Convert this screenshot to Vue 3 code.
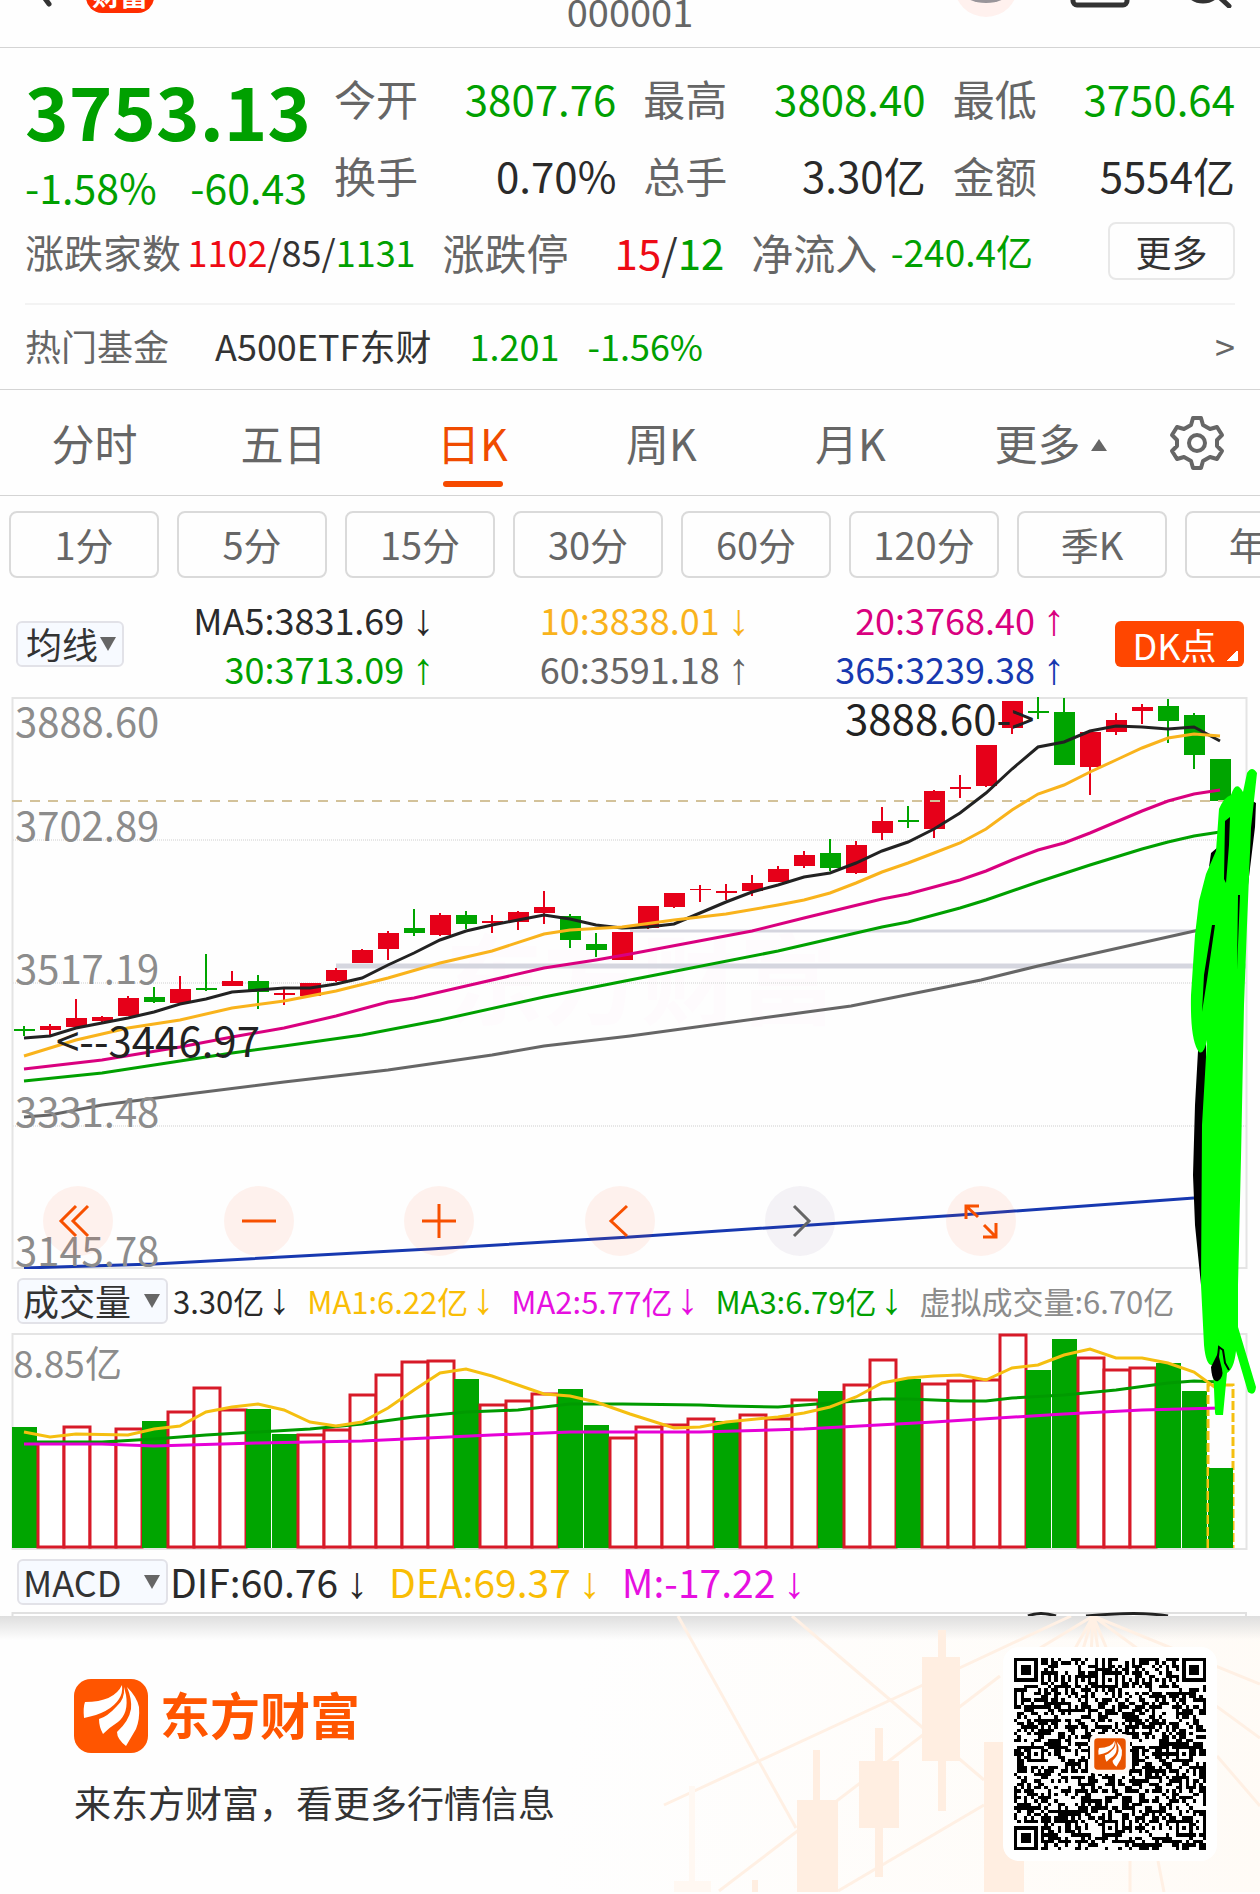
<script setup>
import { ref } from 'vue'

const tabs = ['分时', '五日', '日K', '周K', '月K']
const activeTab = ref('日K')
const periods = ['1分', '5分', '15分', '30分', '60分', '120分', '季K', '年K']

const quotes = [
  { label: '今开', value: '3807.76', tone: 'green' },
  { label: '最高', value: '3808.40', tone: 'green' },
  { label: '最低', value: '3750.64', tone: 'green' },
  { label: '换手', value: '0.70%', tone: 'dark' },
  { label: '总手', value: '3.30亿', tone: 'dark' },
  { label: '金额', value: '5554亿', tone: 'dark' }
]

const averages = [
  { text: 'MA5:3831.69', arrow: '↓', tone: 'dark' },
  { text: '10:3838.01', arrow: '↓', tone: 'yellow' },
  { text: '20:3768.40', arrow: '↑', tone: 'pink' },
  { text: '30:3713.09', arrow: '↑', tone: 'green' },
  { text: '60:3591.18', arrow: '↑', tone: 'gray' },
  { text: '365:3239.38', arrow: '↑', tone: 'blue' }
]

const volumeItems = [
  { text: '3.30亿', arrow: '↓', tone: 'dark' },
  { text: 'MA1:6.22亿', arrow: '↓', tone: 'gold' },
  { text: 'MA2:5.77亿', arrow: '↓', tone: 'magenta' },
  { text: 'MA3:6.79亿', arrow: '↓', tone: 'green' },
  { text: '虚拟成交量:6.70亿', arrow: '', tone: 'light' }
]

const macdItems = [
  { text: 'DIF:60.76', arrow: '↓', tone: 'dark' },
  { text: 'DEA:69.37', arrow: '↓', tone: 'gold' },
  { text: 'M:-17.22', arrow: '↓', tone: 'magenta' }
]

const RED = '#e60019'
const GREEN = '#00a500'
const STEP = 26
const cx = (i) => 24 + i * STEP

// rise, body top, body bottom, high, low
const candles = [
  [0, 332, 334, 329, 339], [1, 329, 333, 327, 338], [1, 321, 330, 302, 331],
  [1, 320, 324, 319, 326], [1, 301, 319, 299, 319], [0, 300, 305, 290, 306],
  [1, 292, 306, 279, 306], [0, 291, 293, 257, 294], [1, 284, 289, 274, 289],
  [0, 284, 295, 278, 312], [1, 296, 298, 292, 308], [1, 286, 299, 286, 300],
  [1, 273, 284, 271, 285], [1, 253, 266, 252, 266], [1, 236, 252, 234, 263],
  [0, 231, 236, 212, 239], [1, 218, 238, 216, 239], [0, 218, 227, 214, 232],
  [1, 224, 226, 218, 236], [1, 215, 225, 214, 233], [1, 210, 216, 194, 227],
  [0, 219, 243, 217, 251], [0, 247, 253, 236, 260], [1, 235, 263, 235, 263],
  [1, 209, 231, 209, 232], [1, 196, 210, 196, 211], [1, 192, 193, 188, 205],
  [1, 194, 196, 187, 203], [1, 186, 194, 178, 199], [1, 172, 185, 169, 185],
  [1, 158, 169, 154, 171], [0, 156, 171, 142, 174], [1, 148, 176, 144, 177],
  [1, 124, 136, 110, 143], [0, 123, 125, 109, 131], [1, 94, 132, 93, 141],
  [1, 90, 92, 78, 101], [1, 48, 89, 48, 90], [1, 4, 31, 4, 37],
  [0, 14, 16, 0, 22], [0, 15, 68, 1, 68], [1, 35, 70, 35, 98],
  [1, 23, 35, 16, 38], [1, 10, 14, 7, 27], [0, 9, 24, 2, 46],
  [0, 18, 58, 16, 72], [0, 62, 104, 62, 104]
].map(([up, top, bottom, high, low], i) => ({ x: cx(i), top, bottom, high, low, color: up ? RED : GREEN }))

const toPoints = (pairs) => pairs.map(([i, y]) => `${Math.round(cx(i))},${y}`).join(' ')

const ma5 = [341, 339, 331, 326, 321, 315, 307, 302, 295, 293, 291, 291, 287, 281, 268, 256, 243, 234, 228, 223, 218, 222, 228, 231, 230, 227, 216, 205, 195, 188, 180, 176, 166, 154, 145, 132, 116, 96, 72, 50, 45, 34, 29, 30, 32, 30, 44].map((y, i) => [i, y])

const priceLines = [
  { color: '#666666', points: toPoints([[0, 420], [1, 418], [3, 408], [6, 398], [10, 385], [14, 373], [18, 358], [20, 349], [23.3, 339], [31.8, 309], [36.8, 283], [39, 269], [45.2, 233]]) },
  { color: '#1738b0', points: toPoints([[0, 571], [5, 567], [15.6, 552], [23.3, 540], [36, 518], [45, 501]]) },
  { color: '#00a000', points: toPoints([[0, 384], [3, 376], [6, 364], [8, 356], [10, 349], [13, 338], [16, 323], [20, 300], [23.3, 283], [29, 254], [33, 230], [34, 225], [36, 211], [37, 203], [39, 185], [41, 168], [43, 152], [44, 145], [45, 139], [46, 135]]) },
  { color: '#d9007f', points: toPoints([[0, 372], [3, 363], [6, 350], [8, 340], [10, 331], [12, 319], [14, 305], [15, 301], [17, 289], [20, 271], [22, 263], [23.3, 257], [28, 234], [30, 221], [33, 202], [34, 197], [36, 183], [37, 174], [38, 163], [39, 153], [40, 146], [41, 136], [43, 114], [44, 104], [45, 97], [46, 93]]) },
  { color: '#222222', points: toPoints(ma5) },
  { color: '#f9b31c', points: toPoints([[0, 359], [2, 343], [3, 337], [4, 331], [6, 323], [8, 311], [10, 304], [12, 294], [14, 281], [16, 266], [18, 254], [20, 237], [21, 233], [23, 230], [25, 223], [27, 217], [29, 208], [30, 203], [31, 196], [32, 186], [33, 175], [34, 166], [35, 156], [36, 146], [37, 132], [38, 113], [39, 97], [40, 88], [41, 75], [42, 63], [43, 51], [44, 41], [45, 37], [46, 39]]) }
]

const axis = [
  { y: 40, text: '3888.60' },
  { y: 144, text: '3702.89' },
  { y: 287, text: '3517.19' },
  { y: 430, text: '3331.48' },
  { y: 569, text: '3145.78' }
]

const volTops = [94, 109, 93, 109, 95, 88, 78, 54, 76, 76, 101, 101, 96, 61, 41, 28, 27, 46, 71, 67, 60, 56, 92, 104, 93, 91, 85, 88, 81, 85, 66, 58, 51, 26, 46, 50, 47, 46, 1, 37, 6, 24, 36, 34, 30, 58, 135]
const volDown = [0, 5, 9, 10, 17, 21, 22, 27, 31, 34, 39, 40, 44, 45, 46]
const volBars = volTops.map((y, i) => ({ x: 12 + i * STEP, y, down: volDown.includes(i) }))

const volLines = [
  { color: '#009a00', points: toPoints([[0, 109], [3, 109], [5, 106], [7, 102], [9, 99], [11, 96], [13, 91], [15, 84], [17, 79], [19, 77], [21, 71], [23, 71], [26, 72], [27, 73], [29, 74], [31, 70], [33, 66], [34, 66], [36, 68], [37, 68], [38, 65], [40, 62], [42, 57], [44, 50], [45, 48], [46, 49]]) },
  { color: '#f5bf10', points: toPoints([[0, 99], [1, 104], [2, 101], [4, 102], [5, 96], [6, 93], [7, 79], [8, 74], [9, 71], [10, 77], [11, 89], [12, 93], [13, 89], [14, 75], [15, 57], [16, 40], [17, 36], [18, 43], [19, 52], [20, 61], [21, 63], [22, 69], [23.3, 81], [25, 95], [26, 94], [27, 89], [29, 84], [30, 80], [31, 74], [32, 64], [33, 50], [34, 45], [35, 43], [36, 42], [37, 47], [38, 35], [39, 32], [40, 22], [41, 16], [42, 25], [43, 25], [44, 30], [45, 39], [46, 58]]) },
  { color: '#e600d6', points: toPoints([[0, 111], [3, 111], [5, 113], [9, 110], [13, 108], [18, 102], [21, 99], [26, 99], [30, 96], [35, 89], [40, 81], [43, 77], [46, 75]]) }
]

// QR matrix, 57 modules a side
const buildQr = () => {
  const n = 57
  let seed = 20251
  const rand = () => {
    seed = (seed * 1103515245 + 12345) % 2147483648
    return seed / 2147483648
  }
  const grid = Array.from({ length: n }, () => Array.from({ length: n }, () => rand() > 0.5))
  const ring = (r, c, half, quiet) => {
    for (let y = -half - quiet; y <= half + quiet; y++) {
      for (let x = -half - quiet; x <= half + quiet; x++) {
        const d = Math.max(Math.abs(x), Math.abs(y))
        if (grid[r + y] && c + x >= 0 && c + x < n) {
          grid[r + y][c + x] = d <= half && d !== half - 1
        }
      }
    }
  }
  for (let k = 8; k < n - 8; k++) {
    grid[6][k] = k % 2 === 0
    grid[k][6] = k % 2 === 0
  }
  ring(3, 3, 3, 1)
  ring(3, n - 4, 3, 1)
  ring(n - 4, 3, 3, 1)
  const marks = [[6, 28], [28, 6], [28, 50], [50, 28], [50, 50]]
  marks.forEach(([r, c]) => ring(r, c, 2, 0))
  let d = ''
  grid.forEach((row, y) => row.forEach((on, x) => {
    if (on) d += `M${x} ${y}h1v1h-1z`
  }))
  return d
}
const qrPath = buildQr()
</script>

<template>
  <main class="app">
    <header class="top">
      <button class="back" aria-label="返回">
        <svg width="20" height="30" viewBox="0 0 20 30"><path d="M2 8 L16 27" stroke="#333" stroke-width="5" stroke-linecap="round" /></svg>
      </button>
      <span class="badge">财富</span>
      <h1 class="code">000001</h1>
      <div class="tools">
        <svg width="64" height="64" viewBox="0 0 64 64"><circle cx="32" cy="32" r="32" fill="#fff1ee" /><ellipse cx="32" cy="40" rx="22" ry="10" fill="#99959a" /></svg>
        <svg class="mail" width="60" height="40" viewBox="0 0 60 40"><rect x="3" y="3" width="54" height="34" rx="4" fill="none" stroke="#333" stroke-width="5" /></svg>
        <svg class="search" width="50" height="50" viewBox="0 0 50 50"><circle cx="21" cy="24" r="19" fill="none" stroke="#333" stroke-width="5" /><path d="M34 36 L47 48" stroke="#333" stroke-width="5" stroke-linecap="round" /></svg>
      </div>
    </header>

    <section class="quote">
      <div class="summary">
        <div class="price-box">
          <div class="price">3753.13</div>
          <div class="change"><span>-1.58%</span><span>-60.43</span></div>
        </div>
        <div class="stats">
          <div v-for="item in quotes" :key="item.label" class="stat">
            <span class="label">{{ item.label }}</span>
            <span :class="item.tone">{{ item.value }}</span>
          </div>
        </div>
      </div>
      <div class="breadth">
        <div class="families">
          <span class="label">涨跌家数</span>
          <span class="counts"><span class="red">1102</span>/85/<span class="green">1131</span></span>
        </div>
        <div class="stat limit">
          <span class="label">涨跌停</span>
          <span><span class="red">15</span>/<span class="green">12</span></span>
        </div>
        <div class="stat limit">
          <span class="label">净流入</span>
          <span class="green flow">-240.4亿</span>
        </div>
        <button class="more">更多</button>
      </div>
      <a href="#" class="fund">
        <span class="label">热门基金</span>
        <span class="fund-name">A500ETF东财</span>
        <span class="green fund-price">1.201</span>
        <span class="green">-1.56%</span>
        <span class="chevron">&gt;</span>
      </a>
    </section>

    <nav class="tabs">
      <button
        v-for="tab in tabs"
        :key="tab"
        class="tab"
        :class="{ active: tab === activeTab }"
        @click="activeTab = tab"
      >{{ tab }}</button>
      <button class="tab tab-more">更多<i class="tri-up"></i></button>
      <button class="gear" aria-label="设置">
        <svg width="56" height="56" viewBox="0 0 56 56" fill="none" stroke="#666" stroke-width="4" stroke-linejoin="round">
          <path d="M24 3 H32 L34 10 L41 14 L48 12 L53 20 L48 25 V31 L53 36 L48 44 L41 42 L34 46 L32 53 H24 L22 46 L15 42 L8 44 L3 36 L8 31 V25 L3 20 L8 12 L15 14 L22 10 Z" />
          <circle cx="28" cy="28" r="8" />
        </svg>
      </button>
    </nav>

    <div class="periods">
      <button v-for="p in periods" :key="p" class="period">{{ p }}</button>
    </div>

    <div class="charts">
      <div class="averages">
        <label class="picker small">
          <select aria-label="指标"><option>均线</option></select>
          <i class="tri-down"></i>
        </label>
        <div class="ma-grid">
          <span v-for="a in averages" :key="a.text" :class="a.tone">{{ a.text }}<b class="arrow">{{ a.arrow }}</b></span>
        </div>
        <button class="dk">DK点</button>
      </div>

      <div class="price-chart">
        <svg class="plot" viewBox="0 0 1260 572">
          <rect x="12.5" y="1" width="1234" height="570" fill="none" stroke="#e4e4e4" stroke-width="2" />
          <text x="445" y="320" class="watermark">东方财富</text>
          <g stroke="#e6e6e6" stroke-width="2" stroke-dasharray="1 1">
            <path d="M13 143H1246M13 286H1246M13 429H1246" />
          </g>
          <path d="M630 234H1246" stroke="#d5d6df" stroke-width="3" />
          <path d="M336 269H1246" stroke="#d5d6df" stroke-width="5" />
          <g v-for="c in candles" :key="c.x" :fill="c.color">
            <rect :x="c.x - 1" :y="c.high" width="2" :height="c.low - c.high" />
            <rect :x="c.x - 10" :y="c.top" width="21" :height="c.bottom - c.top" />
          </g>
          <path d="M12 104H1246" stroke="#d3c29a" stroke-width="2" stroke-dasharray="10 8" />
          <polyline v-for="l in priceLines" :key="l.color" :points="l.points" fill="none" :stroke="l.color" stroke-width="3" />
          <text v-for="a in axis" :key="a.y" x="15" :y="a.y" class="axis">{{ a.text }}</text>
          <text x="845" y="38" class="mark">3888.60-&gt;</text>
          <text x="56" y="360" class="mark">&lt;--3446.97</text>
        </svg>
        <div class="controls">
          <button aria-label="最左"><svg viewBox="0 0 70 70"><path d="M33 20 L18 35 L33 50 M45 20 L30 35 L45 50" /></svg></button>
          <button aria-label="缩小"><svg viewBox="0 0 70 70"><path d="M18 35 H52" /></svg></button>
          <button aria-label="放大"><svg viewBox="0 0 70 70"><path d="M18 35 H52 M35 18 V52" /></svg></button>
          <button aria-label="左移"><svg viewBox="0 0 70 70"><path d="M42 20 L26 35 L42 50" /></svg></button>
          <button aria-label="右移" class="off"><svg viewBox="0 0 70 70"><path d="M29 20 L44 35 L29 50" /></svg></button>
          <button aria-label="全屏"><svg viewBox="0 0 70 70"><path d="M20 33 V20 H33 M20 20 L32 31 M38 39 L50 51 M50 37 V51 H37" /></svg></button>
        </div>
      </div>

      <div class="indicator">
        <label class="picker">
          <select aria-label="副图一"><option>成交量</option></select>
          <i class="tri-down"></i>
        </label>
        <div class="values volume-values">
          <span v-for="v in volumeItems" :key="v.text" :class="v.tone">{{ v.text }}<b v-if="v.arrow" class="arrow">{{ v.arrow }}</b></span>
        </div>
      </div>

      <svg class="plot" viewBox="0 0 1260 218">
        <rect x="12.5" y="1" width="1234" height="215" fill="none" stroke="#e4e4e4" stroke-width="2" />
        <text x="13" y="45" class="axis vol-axis">8.85亿</text>
        <template v-for="b in volBars" :key="b.x">
          <rect v-if="b.down" :x="b.x" :y="b.y" width="25" :height="215 - b.y" fill="#00a500" />
          <rect v-else :x="b.x" :y="b.y + 1" width="26" :height="213 - b.y" fill="#fff" stroke="#d71a28" stroke-width="3" />
        </template>
        <path d="M1208 215V52H1233V215" fill="none" stroke="#f5bf10" stroke-width="3" stroke-dasharray="9 3" />
        <rect x="1209" y="135" width="24" height="80" fill="#00a500" />
        <polyline v-for="l in volLines" :key="l.color" :points="l.points" fill="none" :stroke="l.color" stroke-width="3" />
      </svg>

      <div class="indicator macd">
        <label class="picker">
          <select aria-label="副图二"><option>MACD</option></select>
          <i class="tri-down"></i>
        </label>
        <div class="values macd-values">
          <span v-for="v in macdItems" :key="v.text" :class="v.tone">{{ v.text }}<b class="arrow">{{ v.arrow }}</b></span>
        </div>
      </div>
      <svg class="plot" viewBox="0 0 1260 4">
        <path d="M12.5 4V1H1246V4" fill="none" stroke="#e0e0e0" stroke-width="2" />
        <path d="M1028 4Q1040 -1 1056 4M1086 4Q1140 -1 1168 4" fill="none" stroke="#222" stroke-width="3" />
      </svg>

      <!-- hand drawn marker stroke over both charts -->
      <svg class="scribble" viewBox="0 0 80 660">
        <path d="M67 43 L76 48 L75 72 L68 130 L60 200 H52 Z M31 98 L38 92 V104 L29 112 Z M19 278 L15 350 L13 420 L15 470 L21 530 L26 530 V278 Z" fill="#000" />
        <path d="M67 18 Q72 10 77 18 L71 73 L67 170 L64 250 L61 403 L58 530 V572 L76 632 Q75 642 68 637 L56 596 Q54 614 47 618 L43 660 Q38 668 35 658 L33 610 Q26 612 24 590 L21 530 L22 370 L27 285 Q24 300 19 297 Q10 286 11 240 L15 180 L19 146 L26 119 L36 96 L39 54 Q44 42 51 40 Q56 24 63 37 Z" fill="#00ff00" />
        <path d="M45 66 L50 62 L49 90 L46 128 L44 124 Z M32 170 L35 170 L27 225 L22 257 L24 220 Z M57 215 L58 140 L60 140 Z" fill="#000" />
        <path d="M38 598 L31 612 Q32 628 38 626 Q44 622 42 614 L39 602 Z" fill="#000" />
        <path d="M38 602 L39 592 L43 595 L45 608 L49 615" fill="none" stroke="#000" stroke-width="2" />
      </svg>
    </div>

    <footer class="share">
      <svg class="scene" viewBox="0 0 1260 276" preserveAspectRatio="xMaxYMid slice">
        <g stroke="#fff0e4" stroke-width="3" fill="none">
          <path d="M664 189 L923 69 L1071 0" />
          <path d="M678 0 L796 212" />
          <path d="M792 0 L984 164" />
          <path d="M719 275 L1000 60" />
          <path d="M838 275 L984 189" />
          <path d="M1093 0 L1040 32 M1093 0 L1060 60 M1093 0 L1075 60 M1093 0 L1090 60 M1093 0 L1102 60 M1093 0 L1118 60 M1093 0 L1260 68 M1093 0 L1260 122 M1217 140 L1260 190 M1130 245 V276 M1158 245 L1164 276" />
        </g>
        <g fill="#ffeee1">
          <path d="M938 14h8v181h-8z M922 41h38v104h-38z" />
          <path d="M875 112h8v149h-8z M859 145h40v67h-40z" />
          <path d="M813 134h7v60h-7z M797 184h41v92h-41z" />
          <path d="M1003 65h6v70h-6z M984 126h40v150h-40z" />
          <path d="M752 264h6v12h-6z" />
        </g>
        <path d="M689 170h6v100h-6z M674 265h37v11h-37z" fill="#fff8f2" />
      </svg>
      <div class="brand-box">
        <div class="brand">
          <svg width="74" height="74" viewBox="0 0 74 74">
            <rect width="74" height="74" rx="17" fill="#ff5500" />
            <path d="M10 39 Q9 28 11 23 Q40 23 48 6 Q49 14 45 20 Q36 34 10 39Z M50 8 Q51 20 43 27 Q33 38 25 40 Q25 48 29 55 Q36 48 44 43 Q55 34 52 16Z M53 8 Q63 18 65 28 Q66 40 62 50 L52 67 Q43 60 43 53 Q55 42 57 30 Q58 20 53 8Z" fill="#fff" />
          </svg>
          <strong>东方财富</strong>
        </div>
        <p>来东方财富，看更多行情信息</p>
      </div>
      <div class="qr">
        <svg width="192" height="192" viewBox="0 0 57 57" shape-rendering="crispEdges"><path :d="qrPath" /></svg>
        <svg class="qr-logo" width="40" height="40" viewBox="-10 -10 94 94">
          <rect x="-10" y="-10" width="94" height="94" rx="14" fill="#fffaf6" />
          <rect width="74" height="74" rx="8" fill="#e85400" />
          <path d="M10 39 Q9 28 11 23 Q40 23 48 6 Q49 14 45 20 Q36 34 10 39Z M50 8 Q51 20 43 27 Q33 38 25 40 Q25 48 29 55 Q36 48 44 43 Q55 34 52 16Z M53 8 Q63 18 65 28 Q66 40 62 50 L52 67 Q43 60 43 53 Q55 42 57 30 Q58 20 53 8Z" fill="#fff" />
        </svg>
      </div>
    </footer>
  </main>
</template>

<style>
body {
  background: #fefefe;
}
</style>

<style scoped>
.app {
  font-family: "Noto Sans CJK SC", sans-serif;
  color: #333;
  overflow: hidden;
}

button, select {
  font-family: inherit;
  color: inherit;
  background: none;
  border: none;
  padding: 0;
  margin: 0;
}

.green { color: #00a000; }
.red { color: #ee0a14; }
.dark { color: #2a2a2a; }
.yellow { color: #f9b31c; }
.gold { color: #f9bd05; }
.pink { color: #d9007f; }
.gray { color: #666; }
.light { color: #8c8c8c; }
.blue { color: #1738b0; }
.magenta { color: #e60fe0; }
.label { color: #666; }

/* header, scrolled half out of view */
.top {
  display: flex;
  align-items: flex-end;
  height: 47px;
  border-bottom: 1px solid #d4d4d4;
  overflow: hidden;
}
.back {
  display: flex;
  width: 86px;
  height: 70px;
  justify-content: center;
}
.badge {
  width: 68px;
  height: 40px;
  margin-bottom: 34px;
  border-radius: 16px;
  background: #ff2d00;
  color: #fff;
  font-size: 28px;
  font-weight: 700;
  line-height: 42px;
  text-align: center;
}
.code {
  flex: 1;
  margin: 0 0 6px 152px;
  font-size: 38px;
  font-weight: 400;
  line-height: 60px;
  text-align: center;
  color: #666;
}
.tools {
  display: flex;
  align-items: flex-end;
  gap: 52px;
  margin-right: 28px;
}
.tools svg {
  margin-bottom: 30px;
}
.tools .mail, .tools .search {
  margin-bottom: 39px;
}

.quote {
  padding: 11px 25px 0;
  border-bottom: 1px solid #d4d4d4;
}
.summary {
  display: grid;
  grid-template-columns: minmax(0, 282fr) minmax(0, 901fr);
  gap: 27px;
}
.price-box {
  color: #00a000;
}
.price {
  font-size: 74px;
  font-weight: 700;
  line-height: 100px;
}
.change {
  display: flex;
  justify-content: space-between;
  font-size: 41px;
  line-height: 54px;
}
.stats {
  display: grid;
  grid-template-columns: repeat(3, 1fr);
  column-gap: 27px;
}
.stat {
  display: flex;
  justify-content: space-between;
  align-items: center;
  font-size: 42px;
  line-height: 77px;
}
.breadth {
  display: flex;
  align-items: center;
  gap: 27px;
  height: 76px;
  padding-bottom: 14px;
}
.families {
  flex: 391;
  display: flex;
  justify-content: space-between;
  align-items: center;
  font-size: 39px;
  white-space: nowrap;
}
.counts {
  font-size: 36px;
}
.limit {
  flex: 282;
  white-space: nowrap;
}
.flow {
  font-size: 37px;
}
.more {
  width: 127px;
  height: 58px;
  margin-left: 48px;
  border: 2px solid #e8e8e8;
  border-radius: 8px;
  font-size: 36px;
  line-height: 50px;
}
.fund {
  display: flex;
  align-items: center;
  height: 80px;
  padding-bottom: 4px;
  border-top: 2px solid #f3f3f3;
  font-size: 36px;
  color: inherit;
  text-decoration: none;
}
.fund-name {
  margin: 0 38px 0 46px;
}
.fund-price {
  margin-right: 28px;
}
.chevron {
  margin-left: auto;
  color: #666;
}

.tabs {
  display: grid;
  grid-template-columns: repeat(6, 3fr) 2fr;
  height: 105px;
  border-bottom: 1px solid #d4d4d4;
}
.tab {
  position: relative;
  padding-bottom: 2px;
  font-size: 43px;
  color: #666;
}
.tab-more {
  padding-left: 22px;
}
.active {
  color: #f04b00;
}
.active::after {
  content: "";
  position: absolute;
  left: 50%;
  bottom: 8px;
  width: 60px;
  height: 6px;
  margin-left: -30px;
  border-radius: 3px;
  background: #f64a00;
}
.tri-up {
  display: inline-block;
  margin: 0 0 10px 10px;
  border: 8px solid transparent;
  border-top: 0;
  border-bottom: 12px solid #666;
}
.gear {
  display: flex;
  align-items: center;
  justify-content: center;
}

.periods {
  display: flex;
  gap: 18px;
  padding: 15px 0 0 9px;
  overflow: hidden;
}
.period {
  flex: none;
  width: 150px;
  height: 67px;
  padding-bottom: 2px;
  border: 2px solid #dadada;
  border-radius: 8px;
  font-size: 38px;
  color: #666;
}

.charts {
  position: relative;
}
.averages {
  display: flex;
  align-items: center;
  padding: 17px 16px 4px;
}
.picker {
  position: relative;
  flex: none;
  width: 151px;
  height: 46px;
}
.picker.small {
  width: 108px;
}
.picker select {
  width: 100%;
  height: 100%;
  padding: 0 0 2px 4px;
  appearance: none;
  border: 2px solid #e2e2e8;
  border-radius: 6px;
  background: #f7faff;
  font-size: 36px;
  line-height: 40px;
}
.picker.small select {
  padding-left: 8px;
}
.tri-down {
  position: absolute;
  right: 8px;
  top: 16px;
  border: 8px solid transparent;
  border-bottom: 0;
  border-top: 14px solid #666;
  pointer-events: none;
}
.ma-grid {
  flex: 1;
  display: grid;
  grid-template-columns: repeat(3, 1fr);
  margin-left: -5px;
  font-size: 36px;
  line-height: 49px;
  text-align: right;
}
.arrow {
  margin-left: 8px;
  font-family: "Liberation Sans", sans-serif;
  font-size: 44px;
  font-weight: 400;
  line-height: 1;
}
.dk {
  width: 129px;
  height: 46px;
  margin-left: 50px;
  padding-right: 10px;
  border-radius: 6px;
  background: linear-gradient(135deg, transparent 50%, #fff 50%) right 6px bottom 6px / 11px 11px no-repeat #ff4600;
  color: #fff;
  font-size: 36px;
  line-height: 42px;
}

.price-chart {
  position: relative;
}
.plot {
  display: block;
  width: 100%;
}
.axis {
  font-size: 40px;
  fill: #8c8c8c;
}
.vol-axis {
  font-size: 37px;
}
.mark {
  font-size: 42px;
  fill: #222;
}
.watermark {
  font-size: 98px;
  font-weight: 700;
  fill: #fefbfd;
}
.controls {
  position: absolute;
  left: 43px;
  right: 244px;
  bottom: 13px;
  display: flex;
  justify-content: space-between;
}
.controls button {
  width: 70px;
  height: 70px;
  border-radius: 50%;
  background: rgba(255, 90, 40, 0.08);
}
.controls svg {
  display: block;
  fill: none;
  stroke: #f75000;
  stroke-width: 3;
}
.controls .off {
  background: rgba(90, 50, 120, 0.06);
}
.controls .off svg {
  stroke: #666;
}

.indicator {
  display: flex;
  align-items: center;
  height: 64px;
  padding-left: 17px;
}
.indicator.macd {
  height: 61px;
}
.values {
  display: flex;
  align-items: center;
  padding-bottom: 2px;
  white-space: nowrap;
}
.volume-values {
  gap: 17px;
  margin-left: 5px;
  font-size: 31px;
}
.volume-values .arrow {
  margin-left: 4px;
}
.macd-values {
  gap: 21px;
  margin-left: 2px;
  font-size: 39px;
}

.scribble {
  position: absolute;
  right: 0;
  top: 177px;
  width: 80px;
  height: 660px;
}

.share {
  position: relative;
  display: flex;
  align-items: center;
  justify-content: space-between;
  height: 276px;
  padding: 0 43px 0 74px;
  background: linear-gradient(#dedede, rgba(255, 255, 255, 0) 24px), linear-gradient(100deg, #fefefe 45%, #fffbf6);
}
.scene {
  position: absolute;
  inset: 0;
  width: 100%;
  height: 100%;
}
.brand-box {
  position: relative;
}
.brand {
  display: flex;
  align-items: flex-start;
  gap: 12px;
}
.brand strong {
  color: #ff5500;
  font-size: 50px;
  line-height: 68px;
}
.brand-box p {
  margin: 22px 0 0;
  font-size: 37px;
  line-height: 54px;
}
.qr {
  position: relative;
  padding: 11px;
  border-radius: 16px;
  background: #fff;
}
.qr svg {
  display: block;
}
.qr .qr-logo {
  position: absolute;
  left: 87px;
  top: 87px;
}
</style>
